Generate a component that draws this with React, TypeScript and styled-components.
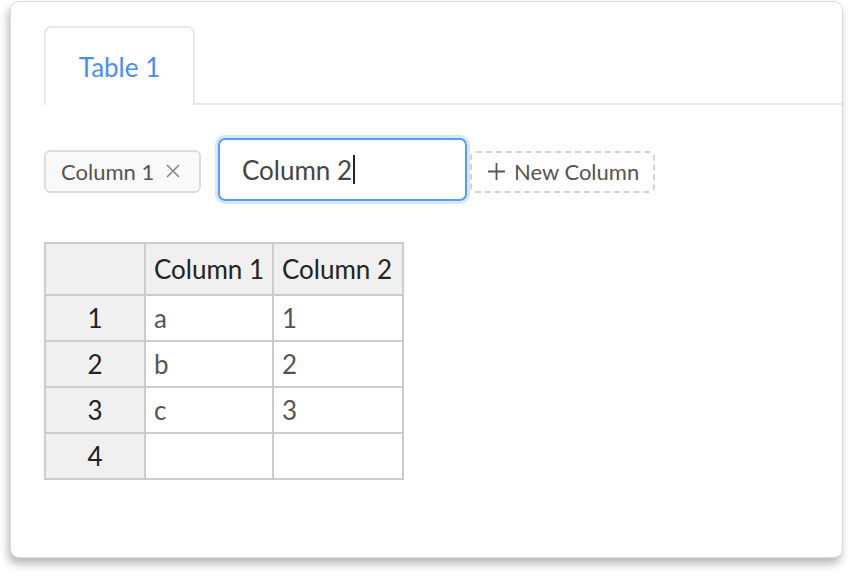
import React from "react";
import styled, { createGlobalStyle } from "styled-components";

const Global = createGlobalStyle`
  html, body { margin: 0; padding: 0; background: #ffffff; }
  body { font-family: "Lato", "Noto Sans", sans-serif; }
  * { box-sizing: border-box; }
`;

const Page = styled.div`
  width: 852px;
  height: 576px;
  padding: 1px 9px 0 10px;
`;

const Card = styled.div`
  width: 833px;
  height: 557px;
  background: #ffffff;
  border: 1px solid #dcdcdc;
  border-radius: 9px;
  box-shadow: -2px 6px 8px rgba(0, 0, 0, 0.28);
  padding: 24px 0 0 33px;
  display: flex;
  flex-direction: column;
  align-items: flex-start;
`;

const TabBar = styled.div`
  display: flex;
  align-items: stretch;
  align-self: stretch;
  height: 79px;
`;

const Tab = styled.div`
  width: 151px;
  border: 2px solid #e8e8e8;
  border-bottom: none;
  border-radius: 7px 7px 0 0;
  display: flex;
  align-items: center;
  justify-content: center;
  color: #4a90e6;
  font-size: 26px;
`;

const TabFiller = styled.div`
  flex: 1;
  border-bottom: 2px solid #e8e8e8;
`;

const EditorRow = styled.div`
  display: flex;
  align-items: center;
  margin-top: 33px;
`;

const Chip = styled.div`
  height: 43px;
  width: 157px;
  border: 2px solid #dcdcdc;
  background: #f9f9f9;
  border-radius: 6px;
  display: flex;
  align-items: center;
  padding-left: 15px;
  gap: 11px;
  color: #555555;
  font-size: 22px;
  margin-top: 3px;
`;

const InputBox = styled.div`
  margin-left: 17px;
  width: 249px;
  height: 63px;
  border: 2px solid #5a9cf0;
  border-radius: 7px;
  box-shadow: 0 0 0 3px #d6e7fb;
  display: flex;
  align-items: center;
  padding-left: 22px;
  color: #444444;
  font-size: 26px;
`;

const Caret = styled.span`
  display: inline-block;
  width: 2px;
  height: 29px;
  background: #222222;
  margin-left: 1px;
`;

const AddButton = styled.div`
  margin-left: 3px;
  margin-top: 4px;
  width: 185px;
  height: 42px;
  border: 2px dashed #d4d4d4;
  border-radius: 6px;
  display: flex;
  align-items: center;
  padding-left: 15px;
  gap: 8px;
  color: #555555;
  font-size: 22px;
`;

const Grid = styled.table`
  margin-top: 41px;
  border-collapse: collapse;
  table-layout: fixed;
  border: 2px solid #cccccc;
  font-size: 26px;
`;

const Col = styled.col<{ $w: number }>`
  width: ${(p) => p.$w}px;
`;

const HeadCell = styled.th`
  height: 52px;
  border: 2px solid #cccccc;
  background: #f0f0f0;
  color: #222222;
  font-weight: 400;
  text-align: left;
  padding: 0 0 0 8px;
  white-space: nowrap;
`;

const RowHead = styled.td`
  height: 46px;
  border: 2px solid #cccccc;
  background: #f0f0f0;
  color: #222222;
  text-align: center;
  padding: 0;
`;

const Cell = styled.td`
  height: 46px;
  border: 2px solid #cccccc;
  color: #555555;
  padding: 0 8px;
`;

const rows = [
  ["1", "a", "1"],
  ["2", "b", "2"],
  ["3", "c", "3"],
  ["4", "", ""],
];

const CloseIcon = () => (
  <svg width="16" height="16" viewBox="0 0 16 16">
    <path d="M2 2 L14 14 M14 2 L2 14" stroke="#888" strokeWidth="1.6" fill="none" />
  </svg>
);

const PlusIcon = () => (
  <svg width="19" height="19" viewBox="0 0 19 19">
    <path d="M9.5 1 V18 M1 9.5 H18" stroke="#555" strokeWidth="1.8" fill="none" />
  </svg>
);

export default function App() {
  return (
    <>
      <Global />
      <Page>
        <Card>
          <TabBar>
            <Tab>Table 1</Tab>
            <TabFiller />
          </TabBar>
          <EditorRow>
            <Chip>
              <span>Column 1</span>
              <CloseIcon />
            </Chip>
            <InputBox>
              <span>Column 2</span>
              <Caret />
            </InputBox>
            <AddButton>
              <PlusIcon />
              <span>New Column</span>
            </AddButton>
          </EditorRow>
          <Grid>
            <colgroup>
              <Col $w={100} />
              <Col $w={128} />
              <Col $w={130} />
            </colgroup>
            <thead>
              <tr>
                <HeadCell />
                <HeadCell>Column 1</HeadCell>
                <HeadCell>Column 2</HeadCell>
              </tr>
            </thead>
            <tbody>
              {rows.map((r) => (
                <tr key={r[0]}>
                  <RowHead>{r[0]}</RowHead>
                  <Cell>{r[1]}</Cell>
                  <Cell>{r[2]}</Cell>
                </tr>
              ))}
            </tbody>
          </Grid>
        </Card>
      </Page>
    </>
  );
}
